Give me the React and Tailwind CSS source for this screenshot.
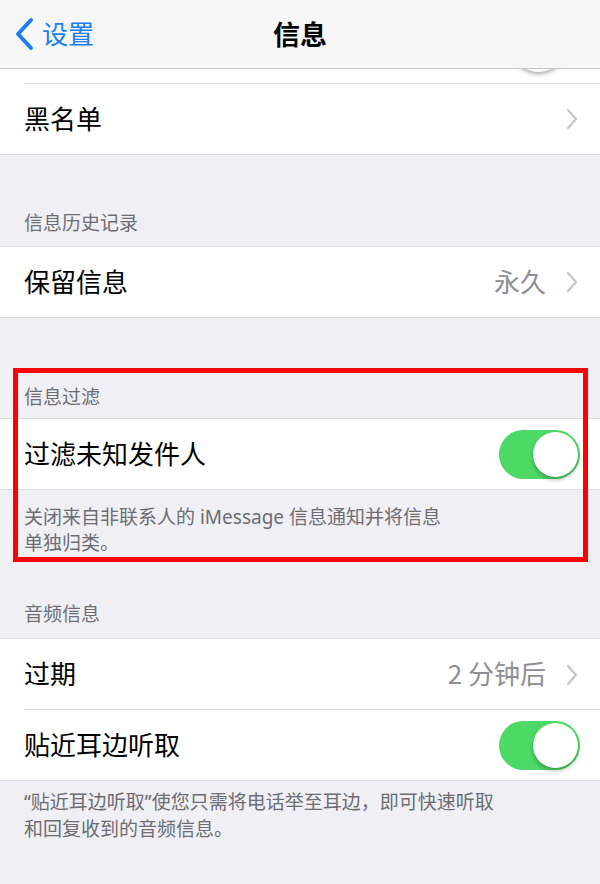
import React from "react";

const font = { fontFamily: '"Noto Sans CJK SC", "Noto Sans", sans-serif' };
const footFont = { fontFamily: '"Noto Sans", "Noto Sans CJK SC", sans-serif' };

function Chevron() {
  return (
    <svg width="12" height="22" viewBox="0 0 12 22" className="ml-[20px] shrink-0">
      <path d="M2 2 L10 11 L2 20" fill="none" stroke="#c4c4c9" strokeWidth="2.2" strokeLinecap="round" strokeLinejoin="round" />
    </svg>
  );
}

function Toggle() {
  return (
    <div className="relative w-[81px] h-[49px] rounded-full bg-[#4cd964] shrink-0 mr-[-2px]">
      <div className="absolute right-[2px] top-[2px] w-[45px] h-[45px] rounded-full bg-white shadow-[0_3px_4px_rgba(0,0,0,0.25)]" />
    </div>
  );
}

function Row({ label, value, chevron, toggle, inset, h = "h-[70px]" }) {
  return (
    <div className={`relative ${h} bg-white flex items-center pl-[24px] pr-[22px]`}>
      <span className="text-[26px] text-black flex-1 leading-none -mt-[3px]">{label}</span>
      {value && <span className="text-[26px] text-[#8e8e93] leading-none -mt-[3px]">{value}</span>}
      {chevron && <Chevron />}
      {toggle && <Toggle />}
      {inset && <div className="absolute left-[24px] right-0 bottom-0 h-px bg-[#dcdce0]" />}
    </div>
  );
}

function Header({ text, height, pb }) {
  return (
    <div className="flex items-end pl-[24px] text-[19px] leading-[26px] text-[#6d6d72]" style={{ height, paddingBottom: pb }}>
      {text}
    </div>
  );
}

export default function App() {
  return (
    <div className="relative w-[600px] h-[884px] overflow-hidden bg-[#efeff4]" style={font}>
      {/* Nav bar */}
      <div className="relative h-[69px] bg-[#f7f7f7] border-b border-[#c9c9cc] flex items-center">
        <div className="flex items-center pl-[14px] text-[#1a7ef5]">
          <svg width="20" height="34" viewBox="0 0 20 34">
            <path d="M17 3 L4 17 L17 31" fill="none" stroke="#1a7ef5" strokeWidth="4" strokeLinecap="round" strokeLinejoin="round" />
          </svg>
          <span className="ml-[8px] text-[26px] leading-none -mt-[2px]">设置</span>
        </div>
        <div className="absolute inset-0 flex items-center justify-center text-[27px] font-bold text-black leading-none -mt-[2px]">
          信息
        </div>
      </div>

      {/* Cut-off row above */}
      <div className="relative h-[15px] bg-white overflow-hidden">
        <div className="absolute left-[510px] bottom-[12px] w-[57px] h-[57px] rounded-full bg-white shadow-[0_2px_4px_rgba(0,0,0,0.35)]" />
        <div className="absolute left-[24px] right-0 bottom-0 h-px bg-[#dcdce0]" />
      </div>
      <Row label="黑名单" chevron />
      <div className="h-px bg-[#dcdce0]" />

      <Header text="信息历史记录" height={91} pb={11} />
      <div className="border-y border-[#dcdce0]">
        <Row label="保留信息" value="永久" chevron />
      </div>

      <Header text="信息过滤" height={100} pb={9} />
      <div className="border-y border-[#dcdce0]">
        <Row label="过滤未知发件人" toggle />
      </div>
      <div className="pl-[24px] pt-[14px] text-[19px] leading-[26px] text-[#6d6d72]" style={footFont}>
        关闭来自非联系人的 iMessage 信息通知并将信息
        <br />
        单独归类。
      </div>

      <Header text="音频信息" height={82} pb={12} />
      <div className="border-y border-[#dcdce0]">
        <Row label="过期" value="2 分钟后" chevron inset h="h-[71px]" />
        <Row label="贴近耳边听取" toggle />
      </div>
      <div className="pl-[24px] pt-[8px] text-[19px] leading-[27px] text-[#6d6d72]" style={footFont}>
        “贴近耳边听取”使您只需将电话举至耳边，即可快速听取
        <br />
        和回复收到的音频信息。
      </div>

      {/* Red annotation box */}
      <div className="absolute left-[13px] top-[368px] w-[575px] h-[194px] border-[5px] border-[#ff0000] pointer-events-none" />
    </div>
  );
}
